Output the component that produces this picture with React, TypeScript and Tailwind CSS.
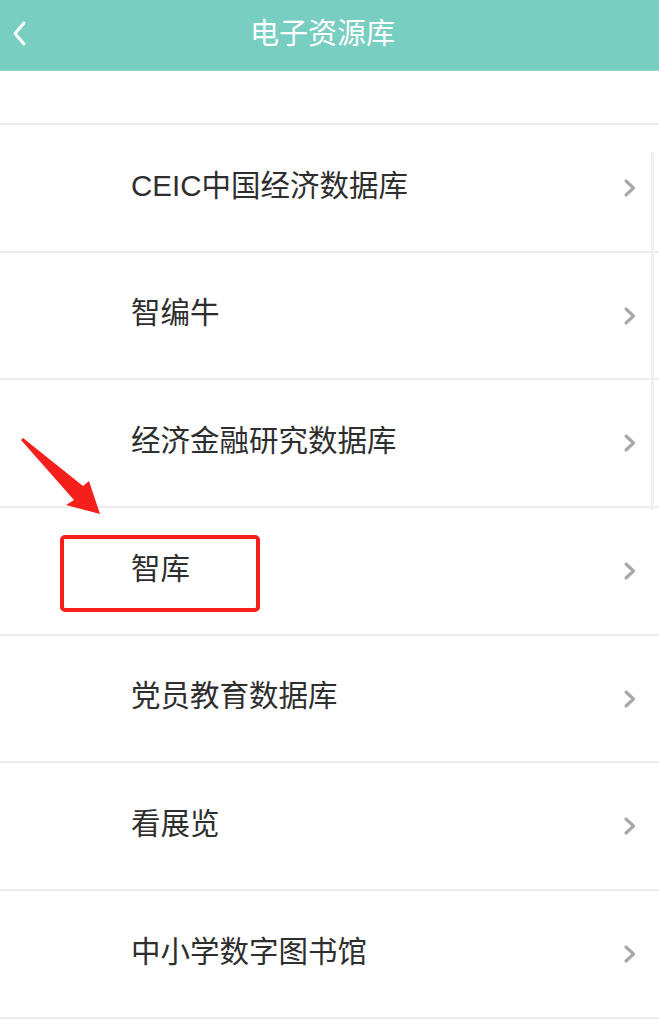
const items = [
  "CEIC中国经济数据库",
  "智编牛",
  "经济金融研究数据库",
  "智库",
  "党员教育数据库",
  "看展览",
  "中小学数字图书馆",
];

function Chevron() {
  return (
    <svg width="14" height="20" viewBox="0 0 14 20" className="shrink-0">
      <path d="M3 3 L10.5 10 L3 17" fill="none" stroke="#a9a9a9" strokeWidth="3.2" strokeLinecap="round" strokeLinejoin="round" />
    </svg>
  );
}

export default function App() {
  return (
    <div
      className="relative w-[659px] h-[1034px] overflow-hidden bg-white"
      style={{ fontFamily: '"Liberation Sans", "Noto Sans CJK SC", sans-serif' }}
    >
      <header className="relative h-[71px] bg-[#77cec1] border-b border-[#8fd8cc] flex items-center justify-center">
        <svg width="20" height="28" viewBox="0 0 20 28" className="absolute left-[10px] top-[20px]">
          <path d="M14 3 L5 13.5 L14 24" fill="none" stroke="#fff" strokeWidth="3" strokeLinecap="round" strokeLinejoin="round" />
        </svg>
        <h1 className="text-white text-[29px] leading-none -mt-[2px] -ml-[14px]">电子资源库</h1>
      </header>

      <div className="h-[54px] border-b-2 border-[#ececec]" />

      <ul>
        {items.map((t) => (
          <li key={t} className="h-[127.7px] border-b-2 border-[#ececec] flex items-center pl-[131px] pr-[22px]">
            <span className="flex-1 text-[#2e2e2e] text-[29.5px] leading-none -mt-[5px]">{t}</span>
            <Chevron />
          </li>
        ))}
      </ul>

      {/* scrollbar */}
      <div className="absolute left-[651px] top-[152px] w-[3px] h-[358px] bg-[#efefef] rounded-full" />

      {/* annotation */}
      <div className="absolute left-[60px] top-[535px] w-[200px] h-[77px] border-4 border-[#f5201b] rounded-[5px]" />
      <svg className="absolute left-0 top-[430px]" width="120" height="100" viewBox="0 0 120 100">
        <path d="M21 10 L23 8 L83 56 L89 51 L100 84 L66 75 L74 70 Z" fill="#f5201b" />
      </svg>
    </div>
  );
}
